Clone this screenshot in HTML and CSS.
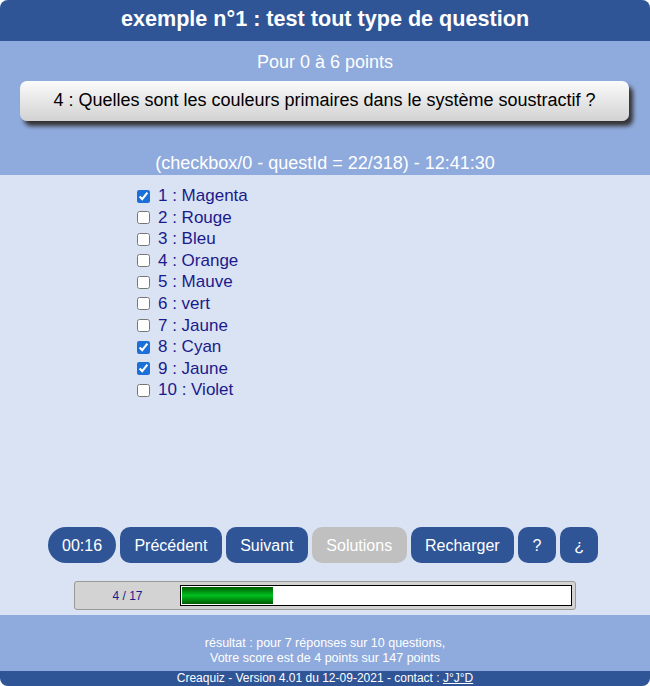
FILE: index.html
```html
<!DOCTYPE html>
<html lang="fr">
<head>
<meta charset="utf-8">
<link rel="stylesheet" href="styles.css">
</head>
<body>
<div class="page">
  <header class="top">exemple n°1 : test tout type de question</header>
  <section class="intro">
    <div class="points">Pour 0 à 6 points</div>
    <div class="question">4 : Quelles sont les couleurs primaires dans le système soustractif ?</div>
    <div class="meta">(checkbox/0 - questId = 22/318) - 12:41:30</div>
  </section>
  <main class="content">
    <ul class="answers">
      <li><label><input type="checkbox" checked> 1 : Magenta</label></li>
      <li><label><input type="checkbox"> 2 : Rouge</label></li>
      <li><label><input type="checkbox"> 3 : Bleu</label></li>
      <li><label><input type="checkbox"> 4 : Orange</label></li>
      <li><label><input type="checkbox"> 5 : Mauve</label></li>
      <li><label><input type="checkbox"> 6 : vert</label></li>
      <li><label><input type="checkbox"> 7 : Jaune</label></li>
      <li><label><input type="checkbox" checked> 8 : Cyan</label></li>
      <li><label><input type="checkbox" checked> 9 : Jaune</label></li>
      <li><label><input type="checkbox"> 10 : Violet</label></li>
    </ul>
    <div class="buttons">
      <span class="btn timer">00:16</span>
      <span class="btn">Précédent</span>
      <span class="btn">Suivant</span>
      <span class="btn disabled">Solutions</span>
      <span class="btn">Recharger</span>
      <span class="btn small">?</span>
      <span class="btn small">¿</span>
    </div>
    <div class="progress">
      <span class="count">4 / 17</span>
      <div class="track"><div class="fill" style="width:23.5%"></div></div>
    </div>
  </main>
  <section class="result">
    <div>résultat : pour 7 réponses sur 10 questions,</div>
    <div>Votre score est de 4 points sur 147 points</div>
  </section>
  <footer class="bottom">Creaquiz - Version 4.01 du 12-09-2021 - contact : <a href="#">J°J°D</a></footer>
</div>
</body>
</html>
```
FILE: styles.css
```css
html, body {
  margin: 0;
  padding: 0;
  background: #ffffff;
}
body {
  font-family: "Liberation Sans", Arial, sans-serif;
}
.page {
  width: 650px;
  height: 686px;
  display: flex;
  flex-direction: column;
  overflow: hidden;
  border-radius: 8px;
  background: #dae3f3;
}
.top {
  height: 41px;
  background: #2f5597;
  color: #fff;
  font-weight: bold;
  font-size: 21.6px;
  text-align: center;
  line-height: 37px;
}
.intro {
  background: #8faadc;
  height: 134px;
  display: flex;
  flex-direction: column;
  align-items: center;
  color: #fff;
  font-size: 18px;
}
.points {
  margin-top: 11px;
  line-height: 20px;
}
.question {
  margin-top: 9px;
  width: 609px;
  height: 40px;
  box-sizing: border-box;
  border-radius: 7px;
  background: linear-gradient(#fbfbfb, #d2d2d2);
  box-shadow: 4px 5px 4px #333;
  color: #000;
  text-align: center;
  line-height: 38px;
  align-self: flex-start;
  margin-left: 20px;
}
.meta {
  margin-top: 32px;
  line-height: 20px;
}
.content {
  flex: 1;
  display: flex;
  flex-direction: column;
}
.answers {
  list-style: none;
  margin: 12px 0 0 0;
  padding: 0 0 0 135px;
  height: 340px;
}
.answers li {
  height: 21.6px;
  font-size: 17px;
  color: #1a1a8c;
  line-height: 18px;
}
.answers label {
  display: flex;
  align-items: center;
  gap: 8px;
}
.answers input {
  width: 13px;
  height: 13px;
  margin: 0 0 0 2px;
  accent-color: #1a6fd9;
}
.buttons {
  display: flex;
  gap: 4px;
  padding-left: 48px;
}
.btn {
  height: 36px;
  line-height: 37px;
  background: #2f5597;
  color: #fff;
  font-size: 16px;
  border-radius: 10px;
  padding: 0 14.4px;
}
.btn.timer {
  border-radius: 18px;
  padding: 0 14px;
}
.btn.disabled {
  background: #c0c0c0;
}
.btn.small {
  width: 38px;
  padding: 0;
  text-align: center;
}
.progress {
  margin: 18px 0 0 74px;
  width: 502px;
  height: 29px;
  box-sizing: border-box;
  background: #d3d3d3;
  border: 1px solid #999;
  border-radius: 3px;
  display: flex;
  align-items: center;
}
.count {
  width: 105px;
  text-align: center;
  font-size: 12px;
  color: #1a1a8c;
}
.track {
  width: 392px;
  height: 21px;
  box-sizing: border-box;
  border: 1px solid #000;
  background: #fff;
  padding: 1px;
}
.fill {
  height: 100%;
  background: linear-gradient(#005a00, #00c020 50%, #005a00);
}
.result {
  background: #8faadc;
  height: 56px;
  box-sizing: border-box;
  padding-top: 21px;
  color: #fff;
  font-size: 12.5px;
  line-height: 15px;
  text-align: center;
}
.bottom {
  background: #2f5597;
  color: #fff;
  font-size: 12px;
  height: 15px;
  line-height: 15px;
  text-align: center;
}
.bottom a {
  color: #fff;
}
```
